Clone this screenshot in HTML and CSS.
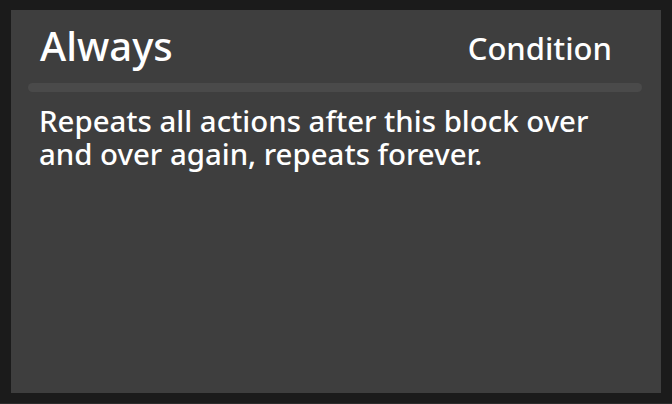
FILE: index.html
```html
<!DOCTYPE html>
<html lang="en">
<head>
<meta charset="utf-8">
<title>Always</title>
<link rel="stylesheet" href="styles.css">
</head>
<body>
<div class="frame">
  <div class="panel">
    <div class="header">
      <div class="title">Always</div>
      <div class="category">Condition</div>
    </div>
    <div class="divider"></div>
    <p class="desc">Repeats all actions after this block over and over again, repeats forever.</p>
  </div>
</div>
</body>
</html>
```

FILE: styles.css
```css
html, body {
  margin: 0;
  padding: 0;
  background: #1b1b1b;
}
.frame {
  width: 672px;
  height: 404px;
  box-sizing: border-box;
  padding: 10px 11px 10px 11px;
  border-bottom: 1px solid #2c2c2c;
}
.panel {
  height: 383px;
  background: #3e3e3e;
  box-sizing: border-box;
  padding: 0 19px 0 17px;
  font-family: "Noto Sans", "Open Sans", sans-serif;
  color: #ffffff;
}
.header {
  height: 73px;
  box-sizing: border-box;
  padding: 12px 30px 0 12px;
  display: flex;
  justify-content: space-between;
  align-items: flex-start;
}
.title {
  font-size: 40px;
  line-height: 48px;
  font-weight: 500;
}
.category {
  font-size: 31px;
  line-height: 38px;
  font-weight: 500;
  margin-top: 7px;
}
.divider {
  height: 9px;
  border-radius: 5px;
  background: #4a4a4a;
}
.desc {
  margin: 13px 0 0 0;
  padding: 0 30px 0 11px;
  font-size: 29.4px;
  line-height: 33px;
  font-weight: 500;
}
```
